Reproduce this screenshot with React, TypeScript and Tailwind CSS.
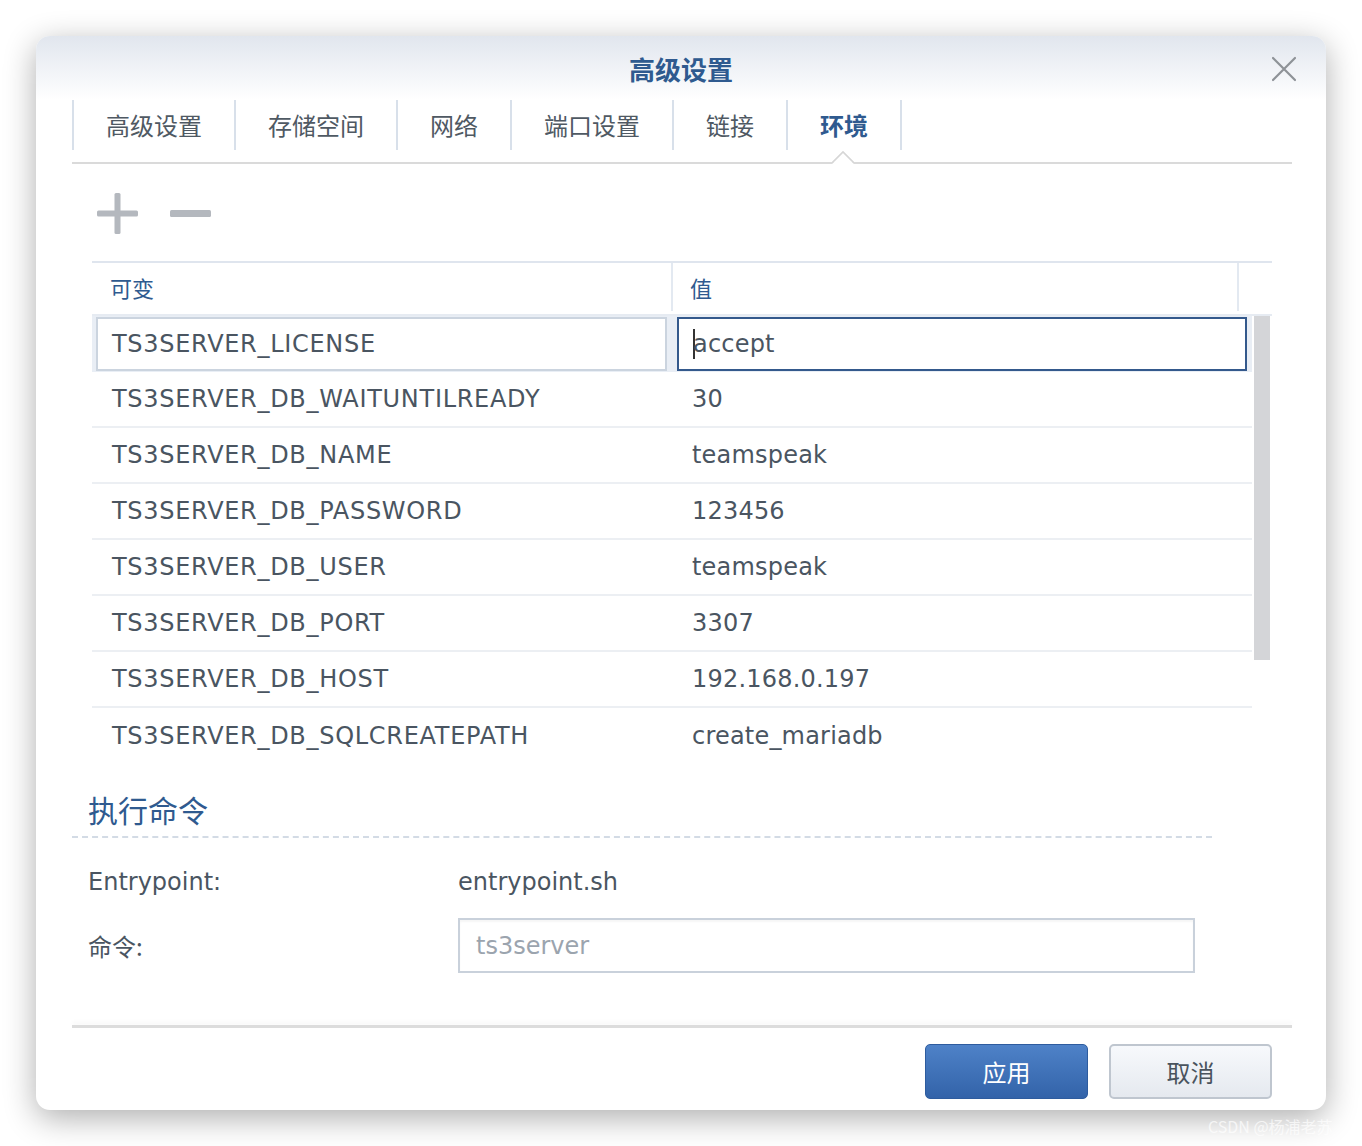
import React from 'react';

const rows: [string, string][] = [
  ['TS3SERVER_DB_WAITUNTILREADY', '30'],
  ['TS3SERVER_DB_NAME', 'teamspeak'],
  ['TS3SERVER_DB_PASSWORD', '123456'],
  ['TS3SERVER_DB_USER', 'teamspeak'],
  ['TS3SERVER_DB_PORT', '3307'],
  ['TS3SERVER_DB_HOST', '192.168.0.197'],
  ['TS3SERVER_DB_SQLCREATEPATH', 'create_mariadb'],
];

const tabs = ['高级设置', '存储空间', '网络', '端口设置', '链接', '环境'];

export default function App() {
  return (
    <div className="relative w-[1362px] h-[1146px] bg-white pt-[36px] pl-[36px] font-['DejaVu_Sans','Noto_Sans_CJK_SC',sans-serif] text-[#4a5561]">
      <div className="w-[1290px] h-[1074px] rounded-[14px] bg-white flex flex-col overflow-hidden shadow-[0_8px_32px_rgba(0,0,0,0.32)]">
        {/* title bar */}
        <div className="relative h-[64px] shrink-0 flex items-center justify-center bg-gradient-to-b from-[#e1e6ee] to-white">
          <span className="text-[26px] font-bold text-[#2f5a8f] font-['Noto_Sans_CJK_SC',sans-serif]">高级设置</span>
          <svg className="absolute right-[28px] top-[19px]" width="28" height="28" viewBox="0 0 28 28">
            <path d="M3 3 L25 25 M25 3 L3 25" stroke="#8e9297" strokeWidth="2.2" strokeLinecap="round" />
          </svg>
        </div>

        <div className="px-[36px] flex flex-col">
          {/* tabs */}
          <div className="relative h-[64px] mr-[-2px] border-b-2 border-[#dadada]">
            <div className="flex h-[50px] border-l-2 border-[#d8e0ea]">
              {tabs.map((t, i) => (
                <div
                  key={t}
                  className={
                    'px-[32px] flex items-center border-r-2 border-[#d8e0ea] text-[24px] font-["Noto_Sans_CJK_SC",sans-serif] ' +
                    (i === tabs.length - 1 ? 'font-bold text-[#2f5a8f]' : 'text-[#4f5963]')
                  }
                >
                  {t}
                </div>
              ))}
            </div>
            <svg className="absolute left-[760px] bottom-[-2px]" width="22" height="14" viewBox="0 0 22 14">
              <polygon points="0,14 11,2 22,14" fill="white" />
              <polyline points="0,13 11,2 22,13" fill="none" stroke="#d6d6d6" strokeWidth="1.6" />
            </svg>
          </div>

          {/* toolbar */}
          <div className="mt-[29px] ml-[25px] flex gap-[32px]">
            <svg width="41" height="41" viewBox="0 0 41 41">
              <rect x="0" y="17.5" width="41" height="6" rx="1.5" fill="#b4b8be" />
              <rect x="17.5" y="0" width="6" height="41" rx="1.5" fill="#b4b8be" />
            </svg>
            <svg width="41" height="41" viewBox="0 0 41 41">
              <rect x="0" y="17" width="41" height="7" rx="1.5" fill="#b4b8be" />
            </svg>
          </div>

          {/* table */}
          <div className="mt-[27px] ml-[20px] w-[1180px]">
            <div className="flex h-[55px] pb-[3px] border-t-2 border-b-2 border-t-[#dfe5ee] border-b-[#e6ebf2] text-[22px] text-[#2f5a8f] font-['Noto_Sans_CJK_SC',sans-serif]">
              <div className="w-[581px] pl-[18px] flex items-center border-r-2 border-[#e3e9f1]">可变</div>
              <div className="w-[566px] pl-[17px] flex items-center border-r-2 border-[#e3e9f1]">值</div>
              <div className="flex-1" />
            </div>
            <div className="flex">
              <div className="w-[1160px] text-[24px]">
                <div className="h-[56px] bg-[#e9eef5] flex items-center pl-[4px] gap-[10px]">
                  <div className="w-[571px] h-[54px] bg-white border-2 border-[#cbd4df] pl-[14px] flex items-center tracking-[0.7px]">
                    TS3SERVER_LICENSE
                  </div>
                  <div className="w-[570px] h-[54px] bg-white border-2 border-[#34598c] pl-[14px] flex items-center tracking-[0.2px]">
                    <span className="w-[2px] h-[30px] bg-[#333] mr-[-2px]" />
                    accept
                  </div>
                </div>
                {rows.map(([k, v], i) => (
                  <div
                    key={k}
                    className={
                      'h-[56px] flex items-center ' + (i < rows.length - 1 ? 'border-b-2 border-[#eceff3]' : '')
                    }
                  >
                    <div className="w-[581px] pl-[20px] tracking-[0.7px]">{k}</div>
                    <div className="pl-[19px] tracking-[0.2px]">{v}</div>
                  </div>
                ))}
              </div>
              <div className="ml-[2px] w-[16px]">
                <div className="h-[344px] bg-[#d4d5d8]" />
              </div>
            </div>
          </div>

          {/* command section */}
          <div className="mt-[25px] w-[1140px] pl-[16px] pb-[7px] leading-[40px] border-b-2 border-dashed border-[#d3dbe5] text-[30px] text-[#2f5a8f] font-['Noto_Sans_CJK_SC',sans-serif]">
            执行命令
          </div>
          <div className="mt-[24px] h-[40px] flex items-center text-[24px]">
            <div className="w-[386px] pl-[16px]">Entrypoint:</div>
            <div>entrypoint.sh</div>
          </div>
          <div className="mt-[16px] h-[55px] flex items-center text-[24px]">
            <div className="w-[386px] pl-[16px] font-['Noto_Sans_CJK_SC',sans-serif]">命令:</div>
            <div className="w-[737px] h-[55px] border-2 border-[#c9d1db] pl-[16px] flex items-center text-[#9ba4ae] shadow-[inset_0_2px_2px_rgba(0,0,0,0.04)]">
              ts3server
            </div>
          </div>

          {/* footer */}
          <div className="mt-[52px] mr-[-2px] h-[3px] bg-[#dcdcdc] shadow-[0_-3px_4px_rgba(0,0,0,0.04)]" />
          <div className="mt-[16px] flex justify-end gap-[21px] pr-[18px] text-[24px] font-['Noto_Sans_CJK_SC',sans-serif]">
            <button className="w-[163px] h-[55px] rounded-[5px] border border-[#2e5c9e] bg-gradient-to-b from-[#4e82c8] to-[#3363a9] text-white">
              应用
            </button>
            <button className="w-[163px] h-[55px] rounded-[5px] border-2 border-[#bfc6cf] bg-gradient-to-b from-[#f7f9fc] to-[#e5e9ef] text-[#4a545e]">
              取消
            </button>
          </div>
        </div>
      </div>
      <div className="absolute left-[1208px] top-[1114px] text-[16px] text-white/70 font-['Noto_Sans_CJK_SC',sans-serif]">
        CSDN @杨浦老苏
      </div>
    </div>
  );
}
